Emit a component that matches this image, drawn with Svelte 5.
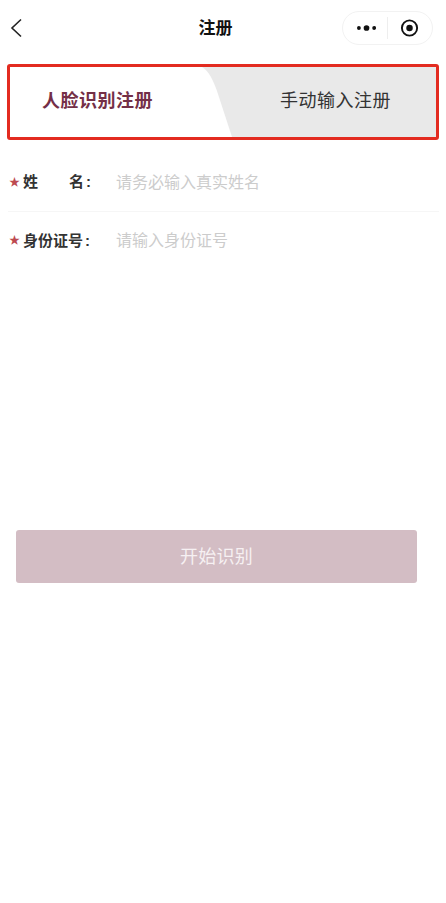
<script>
  const fields = [
    { label: '姓名', placeholder: '请务必输入真实姓名', spread: true },
    { label: '身份证号', placeholder: '请输入身份证号', spread: false },
  ];
</script>

<div class="page">
  <header class="nav">
    <button class="back" aria-label="返回">
      <svg width="12" height="20" viewBox="0 0 12 20">
        <path d="M11 1.5 2 10l9 8.5" fill="none" stroke="#222" stroke-width="1.6" />
      </svg>
    </button>
    <h1>注册</h1>
    <div class="capsule">
      <svg class="dots" width="20" height="8" viewBox="0 0 20 8">
        <circle cx="2" cy="4" r="2" fill="#111" />
        <circle cx="10" cy="4" r="3" fill="#111" />
        <circle cx="18" cy="4" r="2" fill="#111" />
      </svg>
      <span class="sep"></span>
      <svg class="target" width="20" height="20" viewBox="0 0 20 20">
        <circle cx="10" cy="10" r="8" fill="none" stroke="#111" stroke-width="2" />
        <circle cx="10" cy="10" r="3.4" fill="#111" />
      </svg>
    </div>
  </header>

  <div class="tabs">
    <svg class="tab-bg" viewBox="0 0 226 70" preserveAspectRatio="none" aria-hidden="true">
      <path d="M0 0H192C199 4 203 13 207 24L222 70H0Z" fill="#fff" />
    </svg>
    <div class="tab active">人脸识别注册</div>
    <div class="tab">手动输入注册</div>
  </div>

  <form class="form">
    {#each fields as f}
      <div class="row">
        <span class="star">★</span>
        <label class="label" class:spread={f.spread}>
          {#if f.spread}<span>姓</span><span>名<i>:</i></span>{:else}<span>{f.label}<i>:</i></span>{/if}
        </label>
        <span class="placeholder">{f.placeholder}</span>
      </div>
    {/each}
  </form>

  <div class="action">
    <button class="start" type="button">开始识别</button>
  </div>
</div>

<style>
  :global(body) {
    background: #fff;
  }

  .page {
    width: 446px;
    height: 903px;
    overflow: hidden;
    background: #fff;
    font-family: "Liberation Sans", "Noto Sans CJK SC", sans-serif;
  }

  .nav {
    display: grid;
    grid-template-columns: 1fr auto 1fr;
    align-items: center;
    height: 56px;
    padding: 0 13px 0 10px;
  }

  .back {
    justify-self: start;
    display: flex;
    padding: 0;
    border: 0;
    background: none;
  }

  h1 {
    margin: 0 12px 4px 0;
    font-size: 17px;
    font-weight: 700;
    color: #111;
  }

  .capsule {
    justify-self: end;
    display: flex;
    align-items: center;
    box-sizing: border-box;
    width: 91px;
    height: 34px;
    padding: 0 13px 0 14px;
    border: 1px solid #f2f2f2;
    border-radius: 17px;
  }

  .sep {
    width: 1px;
    height: 22px;
    margin: 0 12px 0 11px;
    background: #eee;
  }

  .tabs {
    position: relative;
    display: grid;
    grid-template-columns: 1fr 1fr;
    box-sizing: border-box;
    width: 432px;
    height: 76px;
    margin: 8px 0 0 7px;
    border: 3px solid #e32b20;
    border-radius: 3px;
    background: #e9e9e9;
  }

  .tab-bg {
    position: absolute;
    left: 0;
    top: 0;
    width: 226px;
    height: 70px;
  }

  .tab {
    position: relative;
    display: flex;
    align-items: center;
    justify-content: center;
    font-size: 18px;
    letter-spacing: 0.5px;
    color: #333;
    padding: 0 0 7px 12px;
  }

  .tab.active {
    padding: 0 38px 7px 0;
    font-weight: 700;
    color: #742f47;
  }

  .form {
    margin: 14px 7px 0 8px;
  }

  .row {
    display: flex;
    align-items: center;
    box-sizing: border-box;
    height: 58px;
    padding-bottom: 4px;
    border-bottom: 1px solid #f6f6f6;
  }

  .row:last-child {
    border-bottom: 0;
  }

  .star {
    width: 14px;
    margin-left: 1px;
    font-size: 11px;
    color: #bd4a50;
  }

  .label {
    display: flex;
    width: 68px;
    font-size: 15px;
    font-weight: 700;
    color: #333;
    white-space: nowrap;
  }

  .label.spread {
    justify-content: space-between;
  }

  .label i {
    margin-left: 2px;
    font-style: normal;
  }

  .placeholder {
    margin-left: 25px;
    font-size: 16px;
    color: #ccc;
  }

  .action {
    padding: 260px 29px 0 16px;
  }

  .start {
    display: block;
    width: 100%;
    height: 53px;
    padding: 0 0 3px;
    border: 0;
    border-radius: 3px;
    background: #d3bdc4;
    color: #f6f0f2;
    font-family: inherit;
    font-size: 18px;
    letter-spacing: 0.3px;
  }
</style>
